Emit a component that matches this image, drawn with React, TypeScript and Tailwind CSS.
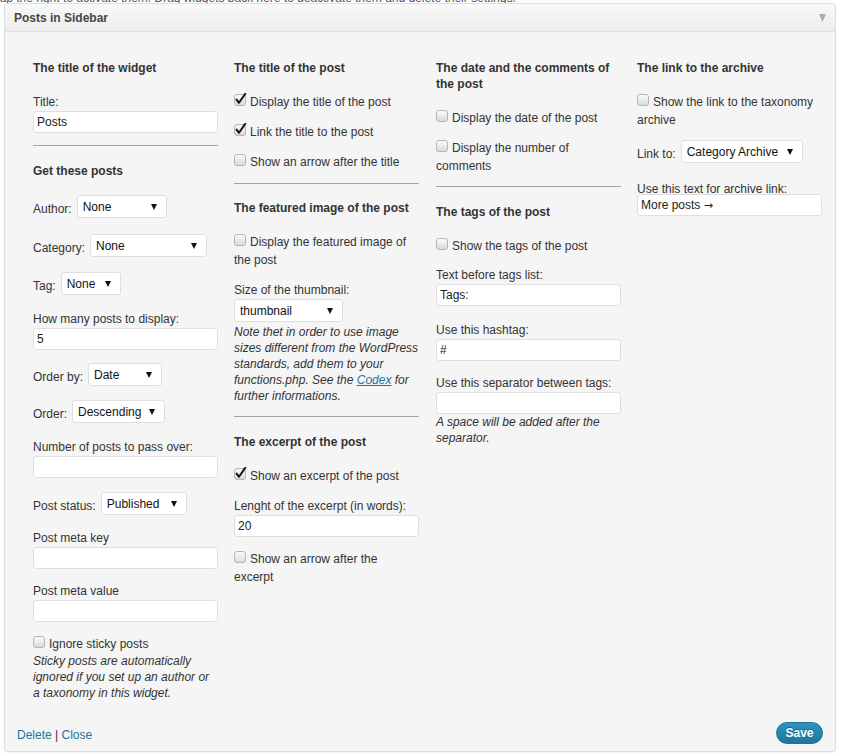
import React from "react";

const Check = ({ checked }: { checked?: boolean }) => (
  <svg width="13" height="14" viewBox="0 0 13 14" className="inline-block align-[-1px] mr-[3px]">
    <defs>
      <linearGradient id="cbg" x1="0" y1="0" x2="0" y2="1">
        <stop offset="0" stopColor="#fdfdfd" />
        <stop offset="1" stopColor="#d9d9d9" />
      </linearGradient>
    </defs>
    <rect x="0.5" y="1.5" width="11" height="11" rx="2.5" fill="url(#cbg)" stroke="#b5b5b5" />
    {checked && <path d="M2.6 6.6 L5 9.8 L11.2 0.9" fill="none" stroke="#151515" strokeWidth="2" strokeLinecap="round" strokeLinejoin="round" />}
  </svg>
);

const H = ({ children, className = "" }: { children: React.ReactNode; className?: string }) => (
  <div className={`font-bold leading-[16px] ${className}`}>{children}</div>
);

const L = ({ children, className = "" }: { children: React.ReactNode; className?: string }) => (
  <div className={`leading-[18px] ${className}`}>{children}</div>
);

const Inp = ({ v = "", className = "" }: { v?: React.ReactNode; className?: string }) => (
  <div className={`h-[22px] w-full bg-white border border-[#dfdfdf] rounded-[3px] pl-[3px] flex items-center leading-[18px] text-[#222] ${className}`}>{v}</div>
);

const Sel = ({ v, w }: { v: string; w: string }) => (
  <div className={`h-[23px] ${w} bg-white border border-[#dfdfdf] rounded-[3px] pl-[5px] pr-[9px] flex items-center justify-between text-[#111] leading-[18px] shrink-0`}>
    <span>{v}</span>
    <svg width="6" height="6" viewBox="0 0 6 6"><path d="M0 0 H6 L3 6 Z" fill="#111" /></svg>
  </div>
);

const Row = ({ label, v, w, className = "" }: { label: string; v: string; w: string; className?: string }) => (
  <div className={`flex items-end gap-[5px] ${className}`}>
    <span className="leading-[18px]">{label}</span>
    <Sel v={v} w={w} />
  </div>
);

const Hr = ({ className = "" }: { className?: string }) => <div className={`h-px w-full bg-[#a4a4a4] ${className}`} />;

const CheckLine = ({ checked, children, className = "" }: { checked?: boolean; children: React.ReactNode; className?: string }) => (
  <div className={`leading-[18px] ${className}`}>
    <Check checked={checked} />
    {children}
  </div>
);

const Note = ({ children, className = "" }: { children: React.ReactNode; className?: string }) => (
  <div className={`italic leading-[16px] ${className}`}>{children}</div>
);

export default function App() {
  return (
    <div className="w-[841px] h-[756px] bg-white overflow-hidden font-['Liberation_Sans',Arial,sans-serif] text-[12px] text-[#333]">
      <div className="h-[3px] overflow-hidden">
        <div className="italic text-[12px] leading-[12px] -mt-[8px] text-[#555] whitespace-nowrap">
          ap the right to activate them. Drag widgets back here to deactivate them and delete their settings.
        </div>
      </div>
      <div className="flex">
        <div className="w-[4px] shrink-0" />
        <div className="w-[832px] h-[749px] flex flex-col border border-[#dfdfdf] rounded-[3px] bg-[#f5f5f5] shadow-[0_1px_1px_rgba(0,0,0,0.04)]">
          <div className="h-[28px] flex items-center justify-between pl-[9px] pr-[9px] bg-linear-to-b from-[#f9f9f9] to-[#ececec] border-b border-[#dfdfdf] rounded-t-[3px]">
            <span className="font-bold text-[#464646]">Posts in Sidebar</span>
            <svg width="7" height="8" viewBox="0 0 7 8"><path d="M0 0 H7 L3.5 8 Z" fill="#ababab" /></svg>
          </div>
          <div className="flex-1 flex flex-col pt-[28px] pl-[28px] pr-[12px] pb-[7px]">
            <div className="flex">
              {/* Column 1 */}
              <div className="w-[185px] shrink-0">
                <H>The title of the widget</H>
                <L className="mt-[17px]">Title:</L>
                <Inp v="Posts" />
                <Hr className="mt-[12px]" />
                <H className="mt-[17px]">Get these posts</H>
                <Row className="mt-[16px]" label="Author:" v="None" w="w-[90px]" />
                <Row className="mt-[16px]" label="Category:" v="None" w="w-[117px]" />
                <Row className="mt-[15px]" label="Tag:" v="None" w="w-[60px]" />
                <L className="mt-[15px]">How many posts to display:</L>
                <Inp v="5" />
                <Row className="mt-[13px]" label="Order by:" v="Date" w="w-[74px]" />
                <Row className="mt-[14px]" label="Order:" v="Descending" w="w-[93px]" />
                <L className="mt-[15px]">Number of posts to pass over:</L>
                <Inp />
                <Row className="mt-[14px]" label="Post status:" v="Published" w="w-[86px]" />
                <L className="mt-[14px]">Post meta key</L>
                <Inp />
                <L className="mt-[13px]">Post meta value</L>
                <Inp />
                <CheckLine className="mt-[13px]">Ignore sticky posts</CheckLine>
                <Note>
                  Sticky posts are automatically<br />ignored if you set up an author or<br />a taxonomy in this widget.
                </Note>
              </div>
              {/* Column 2 */}
              <div className="w-[185px] shrink-0 ml-[16px]">
                <H>The title of the post</H>
                <CheckLine checked className="mt-[17px]">Display the title of the post</CheckLine>
                <CheckLine checked className="mt-[12px]">Link the title to the post</CheckLine>
                <CheckLine className="mt-[12px]">Show an arrow after the title</CheckLine>
                <Hr className="mt-[12px]" />
                <H className="mt-[16px]">The featured image of the post</H>
                <CheckLine className="mt-[17px]">Display the featured image of<br />the post</CheckLine>
                <L className="mt-[12px]">Size of the thumbnail:</L>
                <Sel v="thumbnail" w="w-[109px]" />
                <Note className="mt-[2px]">
                  Note thet in order to use image<br />sizes different from the WordPress<br />standards, add them to your<br />functions.php. See the{" "}
                  <span className="text-[#21759b] underline">Codex</span> for<br />further informations.
                </Note>
                <Hr className="mt-[12px]" />
                <H className="mt-[17px]">The excerpt of the post</H>
                <CheckLine checked className="mt-[17px]">Show an excerpt of the post</CheckLine>
                <L className="mt-[12px]">Lenght of the excerpt (in words):</L>
                <Inp v="20" />
                <CheckLine className="mt-[13px]">Show an arrow after the<br />excerpt</CheckLine>
              </div>
              {/* Column 3 */}
              <div className="w-[185px] shrink-0 ml-[17px]">
                <H>The date and the comments of<br />the post</H>
                <CheckLine className="mt-[17px]">Display the date of the post</CheckLine>
                <CheckLine className="mt-[12px]">Display the number of<br />comments</CheckLine>
                <Hr className="mt-[11px]" />
                <H className="mt-[17px]">The tags of the post</H>
                <CheckLine className="mt-[17px]">Show the tags of the post</CheckLine>
                <L className="mt-[11px]">Text before tags list:</L>
                <Inp v="Tags:" />
                <L className="mt-[15px]">Use this hashtag:</L>
                <Inp v="#" />
                <L className="mt-[13px]">Use this separator between tags:</L>
                <Inp />
                <Note>A space will be added after the<br />separator.</Note>
              </div>
              {/* Column 4 */}
              <div className="w-[185px] shrink-0 ml-[16px]">
                <H>The link to the archive</H>
                <CheckLine className="mt-[17px]">Show the link to the taxonomy<br />archive</CheckLine>
                <Row className="mt-[11px]" label="Link to:" v="Category Archive" w="w-[122px]" />
                <L className="mt-[17px]">Use this text for archive link:</L>
                <Inp
                  v={
                    <span>
                      More posts <span className="font-['DejaVu_Sans',sans-serif] text-[11px]">→</span>
                    </span>
                  }
                  className="-mt-[4px]"
                />
              </div>
            </div>
            <div className="mt-auto flex items-center justify-between -ml-[16px]">
              <div className="leading-[18px] pt-[4px]">
                <span className="text-[#21759b]">Delete</span> | <span className="text-[#21759b]">Close</span>
              </div>
              <button className="h-[22px] w-[47px] rounded-full border border-[#21759b] bg-linear-to-b from-[#2a95c5] to-[#21759b] text-white font-bold text-[12px] leading-[18px] [text-shadow:0_-1px_0_rgba(0,0,0,0.3)]">
                Save
              </button>
            </div>
          </div>
        </div>
      </div>
    </div>
  );
}
